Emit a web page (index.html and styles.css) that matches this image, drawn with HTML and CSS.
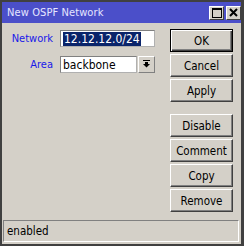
FILE: index.html
```html
<!DOCTYPE html>
<html>
<head>
<meta charset="utf-8">
<link rel="stylesheet" href="styles.css">
</head>
<body>
<div class="window">
  <div class="titlebar">
    <span class="title">New OSPF Network</span>
    <div class="tbtns">
      <span class="tbtn"><svg width="10" height="10" viewBox="0 0 10 10"><rect x="0.5" y="0.5" width="9" height="9" fill="none" stroke="#000" stroke-width="1"/><rect x="0" y="0" width="10" height="2" fill="#000"/></svg></span>
      <span class="tbtn"><svg width="9" height="9" viewBox="0 0 9 9"><path d="M1 1 L8 8 M8 1 L1 8" stroke="#000" stroke-width="2"/></svg></span>
    </div>
  </div>
  <div class="content">
    <div class="form">
      <div class="row">
        <label class="lbl">Network</label>
        <div class="field wide"><span class="sel">12.12.12.0/24</span></div>
      </div>
      <div class="row">
        <label class="lbl">Area</label>
        <div class="field narrow">backbone</div>
        <span class="drop"><svg width="9" height="9" viewBox="0 0 9 9"><rect x="1" y="0" width="7" height="1" fill="#000"/><rect x="3" y="2" width="3" height="2" fill="#000"/><path d="M1 4 H8 L4.5 7.5 Z" fill="#000"/></svg></span>
      </div>
    </div>
    <div class="buttons">
      <div class="group">
        <button class="btn default">OK</button>
        <button class="btn">Cancel</button>
        <button class="btn">Apply</button>
      </div>
      <div class="group">
        <button class="btn">Disable</button>
        <button class="btn">Comment</button>
        <button class="btn">Copy</button>
        <button class="btn">Remove</button>
      </div>
    </div>
  </div>
  <div class="status">enabled</div>
</div>
</body>
</html>
```

FILE: styles.css
```css
* { box-sizing: border-box; }
html, body { margin: 0; padding: 0; }
body {
  width: 244px;
  height: 246px;
  font-family: "DejaVu Sans Condensed", "Liberation Sans", sans-serif;
  font-size: 11px;
}
.window {
  width: 244px;
  height: 246px;
  border: 2px solid #404040;
  border-right-width: 3px;
  background: #d4d0c8;
  display: flex;
  flex-direction: column;
}
.titlebar {
  height: 21px;
  background: #4b4fc9;
  display: flex;
  align-items: center;
  justify-content: space-between;
  padding: 0 0 0 5px;
}
.title {
  color: #e6e6ff;
  font-size: 11px;
  letter-spacing: 0.1px;
}
.tbtns { display: flex; gap: 2px; }
.tbtn {
  width: 15px;
  height: 14px;
  background: #d4d0c8;
  border: 1px solid;
  border-color: #fff #404040 #404040 #fff;
  display: flex;
  align-items: center;
  justify-content: center;
}
.content {
  flex: 1;
  display: flex;
  padding: 6px 0 0 0;
}
.form {
  width: 168px;
  display: flex;
  flex-direction: column;
  gap: 9px;
  padding-top: 1px;
}
.row {
  display: flex;
  align-items: center;
  height: 17px;
}
.lbl {
  width: 51px;
  text-align: right;
  color: #1818e8;
  margin-right: 7px;
}
.field {
  height: 17px;
  background: #fff;
  border: 1px solid;
  border-color: #808080 #b0b0b0 #b0b0b0 #808080;
  padding: 1px 2px 0 2px;
  line-height: 14px;
  font-size: 12px;
  color: #000;
  white-space: nowrap;
  overflow: hidden;
}
.wide { width: 95px; }
.narrow { width: 77px; }
.sel {
  background: #0a246a;
  color: #fff;
  display: inline-block;
  padding: 0 1px;
}
.drop {
  width: 17px;
  height: 17px;
  margin-left: 1px;
  border: 1px solid;
  border-color: #fff #808080 #808080 #fff;
  display: flex;
  align-items: center;
  justify-content: center;
  background: #d4d0c8;
}
.buttons {
  display: flex;
  flex-direction: column;
  gap: 12px;
}
.group {
  display: flex;
  flex-direction: column;
  gap: 2px;
}
.btn {
  width: 63px;
  height: 23px;
  font-family: inherit;
  font-size: 11.5px;
  color: #000;
  background: #d4d0c8;
  border: 1px solid;
  border-color: #fff #404040 #404040 #fff;
  box-shadow: inset -1px -1px #808080;
  padding: 0;
  margin: 0;
}
.btn.default {
  border: 1px solid #000;
  box-shadow: inset 1px 1px #fff, inset -1px -1px #404040, inset -2px -2px #808080;
}
.status {
  height: 22px;
  margin: 0 2px 2px 1px;
  border: 1px solid;
  border-color: #808080 #fff #fff #808080;
  padding: 0 3px;
  line-height: 20px;
  font-size: 11.5px;
  color: #000;
}
```
